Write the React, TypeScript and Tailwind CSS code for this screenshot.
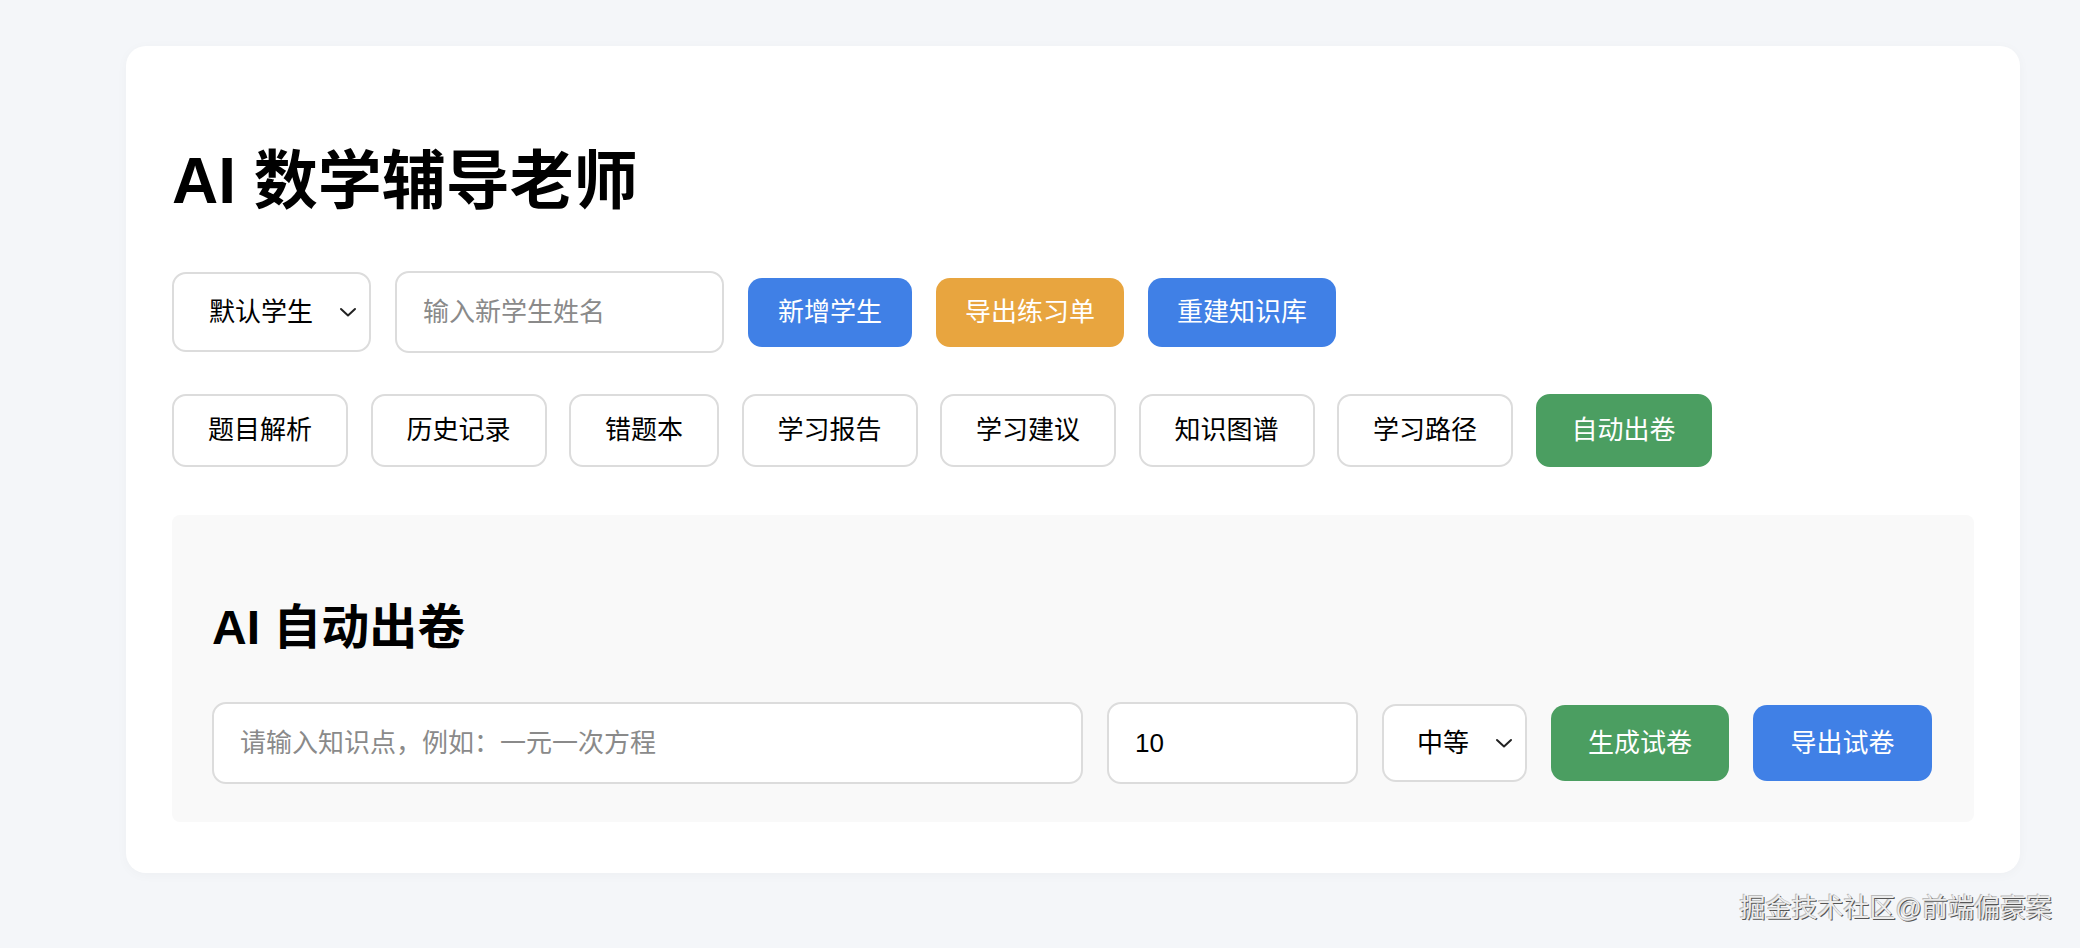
import { useState } from 'react'

const tabs = ['题目解析', '历史记录', '错题本', '学习报告', '学习建议', '知识图谱', '学习路径', '自动出卷']

function Chevron() {
  return (
    <svg width="18" height="12" viewBox="0 0 18 12" className="pointer-events-none absolute right-[14px] top-1/2 -translate-y-1/2">
      <path d="M2 3 L9 9.5 L16 3" fill="none" stroke="#222" strokeWidth="2" strokeLinecap="round" strokeLinejoin="round" />
    </svg>
  )
}

export default function App() {
  const [student, setStudent] = useState('默认学生')
  const [tab, setTab] = useState('自动出卷')
  const [count, setCount] = useState('10')
  const [level, setLevel] = useState('中等')

  return (
    <div
      className="min-h-[948px] bg-[#f4f6f9] pt-[46px] pl-[126px] pr-[60px] relative"
      style={{ fontFamily: '"Liberation Sans", "Noto Sans CJK SC", sans-serif' }}
    >
      <div className="w-[1894px] bg-white rounded-[20px] shadow-[0_2px_12px_rgba(0,0,0,0.03)] px-[46px] pt-[97px] pb-[51px]">
        <h1 className="text-[64px] leading-[77px] font-bold text-black">AI 数学辅导老师</h1>

        {/* Student row */}
        <div className="flex items-center gap-[24px] mt-[51px]">
          <div className="relative">
            <select
              value={student}
              onChange={(e) => setStudent(e.target.value)}
              className="appearance-none w-[199px] h-[80px] pl-[35px] pr-[40px] text-[26px] text-black bg-white border-2 border-[#dcdcdc] rounded-[14px] outline-none"
            >
              <option>默认学生</option>
            </select>
            <Chevron />
          </div>
          <input
            placeholder="输入新学生姓名"
            className="w-[329px] h-[82px] px-[26px] text-[26px] bg-white border-2 border-[#dcdcdc] rounded-[14px] placeholder:text-[#8a8a8a] outline-none"
          />
          <button className="h-[69px] px-[30px] rounded-[14px] bg-[#4080e6] text-white text-[26px]">新增学生</button>
          <button className="h-[69px] px-[29px] rounded-[14px] bg-[#e8a53f] text-white text-[26px]">导出练习单</button>
          <button className="h-[69px] px-[29px] rounded-[14px] bg-[#4080e6] text-white text-[26px]">重建知识库</button>
        </div>

        {/* Tabs */}
        <div className="flex items-center gap-[22.5px] mt-[41px]">
          {tabs.map((t) => (
            <button
              key={t}
              onClick={() => setTab(t)}
              className={`h-[73px] px-[34px] rounded-[14px] text-[26px] border-2 ${
                tab === t ? 'bg-[#4b9e61] border-[#4b9e61] text-white' : 'bg-white border-[#dcdcdc] text-black'
              }`}
            >
              {t}
            </button>
          ))}
        </div>

        {/* Auto paper panel */}
        <div className="mt-[48px] bg-[#f9f9f9] rounded-[8px] px-[40px] pt-[84px] pb-[38px]">
          <h2 className="text-[48px] leading-[58px] font-bold text-black">AI 自动出卷</h2>
          <div className="flex items-center gap-[24px] mt-[45px]">
            <input
              placeholder="请输入知识点，例如：一元一次方程"
              className="w-[871px] h-[82px] px-[26px] text-[26px] bg-white border-2 border-[#dcdcdc] rounded-[14px] placeholder:text-[#8a8a8a] outline-none"
            />
            <input
              value={count}
              onChange={(e) => setCount(e.target.value)}
              className="w-[251px] h-[82px] px-[26px] text-[26px] text-black bg-white border-2 border-[#dcdcdc] rounded-[14px] outline-none"
            />
            <div className="relative">
              <select
                value={level}
                onChange={(e) => setLevel(e.target.value)}
                className="appearance-none w-[145px] h-[78px] pl-[33px] pr-[36px] text-[26px] text-black bg-white border-2 border-[#dcdcdc] rounded-[14px] outline-none"
              >
                <option>简单</option>
                <option>中等</option>
                <option>困难</option>
              </select>
              <Chevron />
            </div>
            <button className="w-[178px] h-[76px] rounded-[14px] bg-[#4b9e61] text-white text-[26px]">生成试卷</button>
            <button className="w-[179px] h-[76px] rounded-[14px] bg-[#4080e6] text-white text-[26px]">导出试卷</button>
          </div>
        </div>
      </div>

      {/* watermark */}
      <div className="absolute right-[28px] bottom-[20px] text-[26px] text-[#ececec] [text-shadow:1px_1px_0_#555,-1px_-1px_0_#bbb]">
        掘金技术社区@前端偏豪案
      </div>
    </div>
  )
}
